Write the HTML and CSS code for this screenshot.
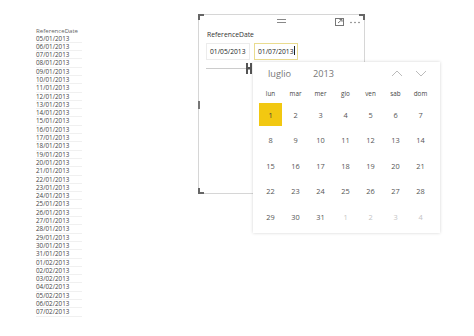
FILE: index.html
```html
<!DOCTYPE html>
<html>
<head>
<meta charset="utf-8">
<link rel="stylesheet" href="styles.css">
</head>
<body>
<div class="canvas">
  <div class="table-visual">
    <div class="th">ReferenceDate</div>
    <div class="td">05/01/2013</div>
    <div class="td">06/01/2013</div>
    <div class="td">07/01/2013</div>
    <div class="td">08/01/2013</div>
    <div class="td">09/01/2013</div>
    <div class="td">10/01/2013</div>
    <div class="td">11/01/2013</div>
    <div class="td">12/01/2013</div>
    <div class="td">13/01/2013</div>
    <div class="td">14/01/2013</div>
    <div class="td">15/01/2013</div>
    <div class="td">16/01/2013</div>
    <div class="td">17/01/2013</div>
    <div class="td">18/01/2013</div>
    <div class="td">19/01/2013</div>
    <div class="td">20/01/2013</div>
    <div class="td">21/01/2013</div>
    <div class="td">22/01/2013</div>
    <div class="td">23/01/2013</div>
    <div class="td">24/01/2013</div>
    <div class="td">25/01/2013</div>
    <div class="td">26/01/2013</div>
    <div class="td">27/01/2013</div>
    <div class="td">28/01/2013</div>
    <div class="td">29/01/2013</div>
    <div class="td">30/01/2013</div>
    <div class="td">31/01/2013</div>
    <div class="td">01/02/2013</div>
    <div class="td">02/02/2013</div>
    <div class="td">03/02/2013</div>
    <div class="td">04/02/2013</div>
    <div class="td">05/02/2013</div>
    <div class="td">06/02/2013</div>
    <div class="td">07/02/2013</div>
  </div>

  <div class="slicer">
    <span class="corner tl"></span>
    <span class="corner tr"></span>
    <span class="corner bl"></span>
    <span class="grip-top"></span>
    <span class="grip-left"></span>
    <div class="toolbar">
      <svg class="focus" width="9" height="8" viewBox="0 0 9 8">
        <rect x="0.5" y="0.5" width="8" height="7" fill="none" stroke="#777" stroke-width="1"/>
        <path d="M3 5 L7 1.5 M4.5 1.5 H7 V3.8" fill="none" stroke="#777" stroke-width="1"/>
      </svg>
      <svg class="dots" width="10" height="3" viewBox="0 0 10 3">
        <circle cx="1" cy="1.5" r="0.8" fill="#777"/>
        <circle cx="5" cy="1.5" r="0.8" fill="#777"/>
        <circle cx="9" cy="1.5" r="0.8" fill="#777"/>
      </svg>
    </div>
    <div class="title">ReferenceDate</div>
    <div class="inputs">
      <div class="inp">01/05/2013</div>
      <div class="inp active">01/07/2013<span class="caret"></span></div>
    </div>
    <div class="slider">
      <span class="track"></span>
      <svg class="thumb" width="6" height="11" viewBox="0 0 6 11">
        <rect x="0" y="0" width="2" height="11" fill="#555"/>
        <rect x="4" y="0" width="2" height="11" fill="#555"/>
        <rect x="0" y="4" width="6" height="2.5" fill="#555"/>
      </svg>
    </div>
  </div>

  <div class="popup">
    <div class="cal-head">
      <span class="month">luglio</span>
      <span class="year">2013</span>
      <span class="nav">
        <svg width="12" height="7" viewBox="0 0 12 7"><path d="M1 6 L6 1 L11 6" fill="none" stroke="#bbb" stroke-width="1"/></svg>
        <svg width="12" height="7" viewBox="0 0 12 7"><path d="M1 1 L6 6 L11 1" fill="none" stroke="#bbb" stroke-width="1"/></svg>
      </span>
    </div>
    <div class="grid">
      <div class="dow">lun</div><div class="dow">mar</div><div class="dow">mer</div><div class="dow">gio</div><div class="dow">ven</div><div class="dow">sab</div><div class="dow">dom</div>
      <div class="day sel"><span>1</span></div><div class="day"><span>2</span></div><div class="day"><span>3</span></div><div class="day"><span>4</span></div><div class="day"><span>5</span></div><div class="day"><span>6</span></div><div class="day"><span>7</span></div>
      <div class="day"><span>8</span></div><div class="day"><span>9</span></div><div class="day"><span>10</span></div><div class="day"><span>11</span></div><div class="day"><span>12</span></div><div class="day"><span>13</span></div><div class="day"><span>14</span></div>
      <div class="day"><span>15</span></div><div class="day"><span>16</span></div><div class="day"><span>17</span></div><div class="day"><span>18</span></div><div class="day"><span>19</span></div><div class="day"><span>20</span></div><div class="day"><span>21</span></div>
      <div class="day"><span>22</span></div><div class="day"><span>23</span></div><div class="day"><span>24</span></div><div class="day"><span>25</span></div><div class="day"><span>26</span></div><div class="day"><span>27</span></div><div class="day"><span>28</span></div>
      <div class="day"><span>29</span></div><div class="day"><span>30</span></div><div class="day"><span>31</span></div><div class="day out"><span>1</span></div><div class="day out"><span>2</span></div><div class="day out"><span>3</span></div><div class="day out"><span>4</span></div>
    </div>
  </div>
</div>
</body>
</html>
```
FILE: styles.css
```css
* { box-sizing: border-box; }
html, body { margin: 0; padding: 0; background: #fff; }
body {
  width: 474px;
  height: 336px;
  overflow: hidden;
  font-family: "Open Sans", "Liberation Sans", sans-serif;
  color: #333;
}
.canvas { position: relative; width: 474px; height: 336px; }

/* table visual */
.table-visual {
  position: absolute;
  left: 36px;
  top: 27px;
  width: 46px;
}
.th {
  height: 7.5px;
  line-height: 7.5px;
  font-size: 6.1px;
  color: #666;
  white-space: nowrap;
}
.td {
  height: 8.3px;
  line-height: 8.3px;
  font-size: 6.3px;
  color: #444;
  border-bottom: 0.5px solid #f0f0f0;
  white-space: nowrap;
}

/* slicer visual */
.slicer {
  position: absolute;
  left: 198px;
  top: 14px;
  width: 167px;
  height: 180px;
  border: 1px solid #d6d6d6;
  padding: 15px 0 0 7px;
}
.corner { position: absolute; width: 6px; height: 6px; border-color: #666; border-style: solid; border-width: 0; }
.corner.tl { left: -1px; top: -1px; border-left-width: 2px; border-top-width: 2px; }
.corner.tr { right: -1px; top: -1px; border-right-width: 2px; border-top-width: 2px; }
.corner.bl { left: -1px; bottom: -1px; border-left-width: 2px; border-bottom-width: 2px; }
.grip-top {
  position: absolute;
  left: 78px;
  top: 4px;
  width: 9px;
  height: 4px;
  border-top: 1px solid #888;
  border-bottom: 1px solid #888;
}
.grip-left {
  position: absolute;
  left: -1px;
  top: 86px;
  width: 2px;
  height: 8px;
  background: #777;
}
.toolbar {
  position: absolute;
  right: 4px;
  top: 3px;
  display: flex;
  align-items: center;
  gap: 6px;
}
.toolbar svg { display: block; }
.title {
  font-size: 6.8px;
  line-height: 10px;
  color: #333;
  padding-left: 1px;
}
.inputs {
  display: flex;
  gap: 4px;
  margin-top: 3px;
}
.inp {
  width: 44px;
  height: 17px;
  border: 1px solid #ececec;
  font-size: 6.7px;
  line-height: 15px;
  padding-left: 3px;
  color: #222;
  white-space: nowrap;
}
.inp.active { border-color: #eadc8f; padding-left: 3px; }
.caret {
  display: inline-block;
  width: 1px;
  height: 9px;
  background: #222;
  vertical-align: -1px;
}
.slider {
  display: flex;
  align-items: center;
  margin-top: 3px;
  height: 11px;
}
.track { width: 40px; height: 1px; background: #ccc; }
.thumb { display: block; }

/* calendar popup */
.popup {
  position: absolute;
  left: 253px;
  top: 62px;
  width: 187px;
  height: 171px;
  background: #fff;
  box-shadow: 0 0 3px rgba(0,0,0,0.18);
  padding: 0 6px 0 5px;
}
.cal-head {
  height: 22px;
  display: flex;
  align-items: center;
  padding-left: 10px;
  font-size: 9.2px;
  color: #777;
}
.year { margin-left: 22px; }
.nav { margin-left: auto; display: flex; gap: 12px; margin-right: 7px; }
.nav svg { display: block; }
.grid {
  display: grid;
  grid-template-columns: repeat(7, 25px);
  grid-template-rows: 18px repeat(5, 25.5px);
}
.dow {
  display: flex;
  align-items: center;
  justify-content: center;
  font-size: 6.3px;
  color: #444;
}
.day {
  display: flex;
  align-items: center;
  justify-content: center;
  font-size: 7.4px;
  color: #555;
}
.day span { display: flex; align-items: center; justify-content: center; width: 23px; height: 23px; }
.day.sel span { background: #f2c811; color: #333; }
.day.out { color: #c4c4c4; }
```
